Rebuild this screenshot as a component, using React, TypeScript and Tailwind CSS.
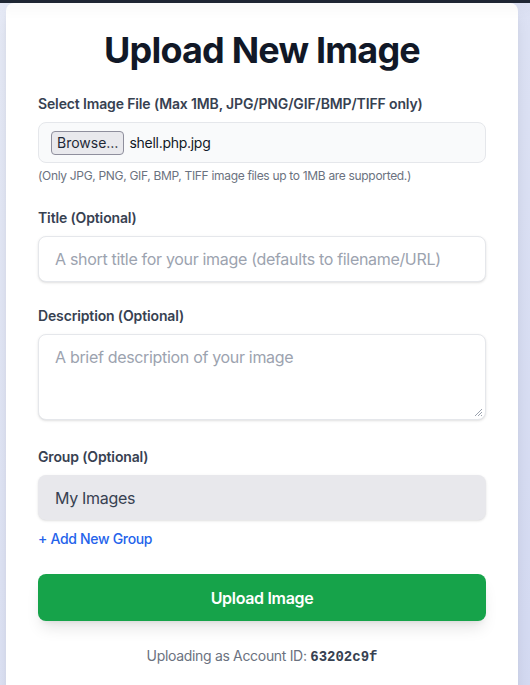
import React from "react";

export default function App() {
  return (
    <div
      className="min-h-[685px] bg-gradient-to-br from-[#e6eaf6] to-[#d3d9f1] overflow-hidden tracking-[-0.02em]"
      style={{ fontFamily: "Inter, 'Noto Sans', sans-serif" }}
    >
      <div className="relative z-10 h-[3px] bg-[#1e2633] shadow-[0_4px_14px_rgba(0,0,0,0.10)]" />
      <div className="ml-[6px] w-[512px] rounded-t-lg bg-white px-8 pt-[27px] pb-8 shadow-lg">
        <h1 className="mb-6 text-center text-4xl font-bold leading-10 tracking-[-0.0225em] text-[#111827]">
          Upload New Image
        </h1>

        <div>
          <label className="mb-2 block text-sm font-semibold leading-5 tracking-[-0.01em] text-[#374151]">
            Select Image File (Max 1MB, JPG/PNG/GIF/BMP/TIFF only)
          </label>
          <div className="flex h-[41px] items-center gap-[5px] rounded-lg border border-[#e5e7eb] bg-[#f9fafb] px-3">
            <span className="flex h-[24px] items-center rounded-[4px] border border-[#8f8f9d] bg-[#e9e9ed] px-[5px] text-sm tracking-normal text-[#1f2937]">
              Browse…
            </span>
            <span className="text-sm tracking-[-0.02em] text-[#111827]">shell.php.jpg</span>
          </div>
          <p className="mt-[5px] text-xs leading-4 text-[#6b7280]">
            (Only JPG, PNG, GIF, BMP, TIFF image files up to 1MB are supported.)
          </p>
        </div>

        <div className="mt-6">
          <label className="mb-2 block text-sm font-semibold leading-5 tracking-[-0.01em] text-[#374151]">
            Title (Optional)
          </label>
          <div className="flex h-[46px] items-center rounded-lg border border-[#e5e7eb] bg-white px-4 shadow-sm">
            <span className="text-base text-[#9ca3af]">
              A short title for your image (defaults to filename/URL)
            </span>
          </div>
        </div>

        <div className="mt-6">
          <label className="mb-2 block text-sm font-semibold leading-5 tracking-[-0.01em] text-[#374151]">
            Description (Optional)
          </label>
          <div className="relative h-[86px] rounded-lg border border-[#e5e7eb] bg-white px-4 pt-[10px] shadow-sm">
            <span className="text-base text-[#9ca3af]">
              A brief description of your image
            </span>
            <svg
              className="absolute bottom-[2px] right-[2px]"
              width="10"
              height="10"
              viewBox="0 0 10 10"
            >
              <path d="M9 2 L2 9 M9 5 L5 9 M9 8 L8 9" stroke="#9ca3af" strokeWidth="1" />
            </svg>
          </div>
        </div>

        <div className="mt-[27px]">
          <label className="mb-2 block text-sm font-semibold leading-5 tracking-[-0.01em] text-[#374151]">
            Group (Optional)
          </label>
          <div className="flex h-[45px] items-center rounded-lg bg-[#e8e8ec] px-[17px] shadow-sm">
            <span className="text-base text-[#374151]">My Images</span>
          </div>
        </div>

        <div className="mt-[9px] text-sm font-medium leading-5 text-[#2563eb]">+ Add New Group</div>

        <button className="mt-[25px] flex h-[47px] w-full items-center justify-center rounded-lg bg-[#16a34a] text-base font-semibold text-white shadow-lg">
          Upload Image
        </button>

        <p className="mt-[25px] text-center text-sm leading-5 text-[#6b7280]">
          Uploading as Account ID:{" "}
          <span
            className="font-bold tracking-normal text-[#374151]"
            style={{ fontFamily: "'Liberation Mono', monospace" }}
          >
            63202c9f
          </span>
        </p>
      </div>
    </div>
  );
}
